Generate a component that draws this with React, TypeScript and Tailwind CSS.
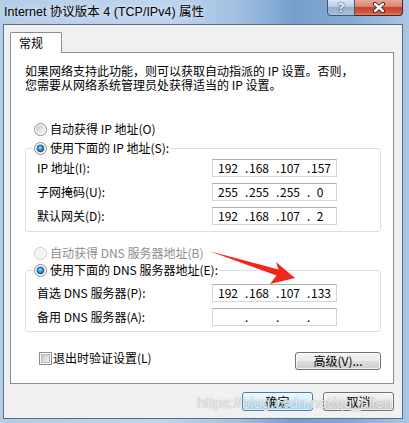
import React from "react";

function Radio({ checked, disabled }: { checked?: boolean; disabled?: boolean }) {
  return (
    <svg width="13" height="13" viewBox="0 0 13 13" className="shrink-0">
      <defs>
        <linearGradient id="radioFill" x1="0" y1="0" x2="1" y2="1">
          <stop offset="0" stopColor="#c9c9c9" />
          <stop offset="1" stopColor="#fbfbfb" />
        </linearGradient>
        <radialGradient id="radioDot" cx="0.45" cy="0.4" r="0.65">
          <stop offset="0" stopColor="#a6ecff" />
          <stop offset="0.45" stopColor="#2f98dd" />
          <stop offset="1" stopColor="#0d4b88" />
        </radialGradient>
      </defs>
      <circle cx="6.5" cy="6.5" r="6" fill="#ffffff" stroke={disabled ? "#c6c6c6" : "#8a8a8a"} />
      <circle cx="6.5" cy="6.5" r="4.6" fill={disabled ? "#f3f3f3" : "url(#radioFill)"} />
      {checked && <circle cx="6.5" cy="6.5" r="3.4" fill="url(#radioDot)" stroke="#1b4f82" strokeWidth="0.7" />}
    </svg>
  );
}

function Checkbox() {
  return (
    <svg width="13" height="13" viewBox="0 0 13 13" className="shrink-0">
      <defs>
        <linearGradient id="cbFill" x1="0" y1="0" x2="1" y2="1">
          <stop offset="0" stopColor="#c6c6c6" />
          <stop offset="1" stopColor="#f5f5f5" />
        </linearGradient>
      </defs>
      <rect x="0.5" y="0.5" width="12" height="12" fill="#ffffff" stroke="#8e8f8f" />
      <rect x="2.5" y="2.5" width="8" height="8" fill="url(#cbFill)" stroke="#b4b6b8" />
    </svg>
  );
}

function IpBox({ parts }: { parts: string[] }) {
  return (
    <div className="flex h-[18px] w-[125px] border border-[#d3d6dc] border-t-[#abadb3] bg-white leading-[16px]">
      {parts.map((p, i) => (
        <div key={i} className="flex w-[31px] shrink-0">
          <span className="w-[5px] pl-[1px]">{i > 0 ? "." : ""}</span>
          <span className="w-[18px] text-center">{p}</span>
        </div>
      ))}
    </div>
  );
}

function WinButton({ label, primary, className }: { label: string; primary?: boolean; className: string }) {
  return (
    <div
      className={
        "flex items-center justify-center rounded-[3px] border leading-[16px] shadow-[inset_0_0_0_1px_rgba(255,255,255,0.7)] " +
        (primary
          ? "border-[#3c7fb1] bg-[linear-gradient(#eaf6fd_0%,#d9f0fc_50%,#bee6fd_50%,#a7d9f5_100%)] "
          : "border-[#707070] bg-[linear-gradient(#f2f2f2_0%,#ebebeb_50%,#dddddd_50%,#cfcfcf_100%)] ") +
        className
      }
    >
      {label}
    </div>
  );
}

export default function App() {
  return (
    <div className="relative flex h-[423px] w-[409px] flex-col overflow-hidden bg-[linear-gradient(90deg,#b3cde8_0%,#bdd5ee_40%,#a2c0e1_58%,#769fcd_72%,#84aad4_86%,#a9c7e6_100%)] font-['Noto_Sans_CJK_SC',sans-serif] text-[12px] text-black">
      {/* title bar */}
      <div className="flex h-[24px] shrink-0 items-start justify-between pl-[4px] pr-[6px]">
        <div className="mt-[3px] font-['Liberation_Sans','Noto_Sans_CJK_SC',sans-serif] text-[12.5px] leading-[18px] [text-shadow:0_0_6px_rgba(255,255,255,0.95)]">
          Internet 协议版本 4 (TCP/IPv4) 属性
        </div>
        <div className="flex">
          <div className="flex h-[16px] w-[28px] items-center justify-center rounded-bl-[4px] border border-t-0 border-[#48596e] bg-[linear-gradient(#dbe6f2_0%,#b9cde2_45%,#92afcd_50%,#a8c2dc_100%)] font-['Noto_Sans',sans-serif] text-[12px] font-bold leading-[14px] text-white [text-shadow:0_0_2px_#1f3550,0_0_1px_#1f3550]">
            ?
          </div>
          <div className="flex h-[16px] w-[48px] items-center justify-center rounded-br-[4px] border border-l-0 border-t-0 border-[#4a2520] bg-[linear-gradient(#e9a89a_0%,#da826f_45%,#c6432d_50%,#d4573c_85%,#e3856a_100%)]">
            <svg width="14" height="11" viewBox="0 0 14 11">
              <path d="M3 2 L11 9 M11 2 L3 9" stroke="#3b1c16" strokeWidth="4.2" strokeLinecap="round" />
              <path d="M3 2 L11 9 M11 2 L3 9" stroke="#ffffff" strokeWidth="2.4" strokeLinecap="round" />
            </svg>
          </div>
        </div>
      </div>

      {/* client area */}
      <div className="ml-[3px] mr-[6px] flex h-[395px] shrink-0 flex-col border border-[#5b6d82] bg-[#f0f0f0] px-[6px] pt-[7px]">
        {/* tab */}
        <div className="relative z-10 -mb-px flex h-[21px] w-[52px] rounded-t-[2px] border border-b-0 border-[#898c95] bg-white pl-[8px] pt-[1px] leading-[18px]">
          常规
        </div>
        {/* panel */}
        <div className="flex h-[332px] w-[384px] flex-col border border-[#898c95] bg-white">
          <div className="ml-[14px] mt-[11px] leading-[14px]">
            <div>如果网络支持此功能，则可以获取自动指派的 IP 设置。否则，</div>
            <div>您需要从网络系统管理员处获得适当的 IP 设置。</div>
          </div>

          <div className="ml-[23px] mt-[29px] flex h-[16px] items-center gap-[3px] leading-[16px]">
            <Radio />
            <span>自动获得 IP 地址(O)</span>
          </div>

          <fieldset className="ml-[14px] mt-[3px] w-[356px] rounded-[3px] border border-[#d5dfe5] pb-[6px]">
            <legend className="ml-[7px] px-[1px]">
              <div className="flex h-[16px] items-center gap-[3px] leading-[16px]">
                <Radio checked />
                <span>使用下面的 IP 地址(S):</span>
              </div>
            </legend>
            <div className="ml-[11px] grid grid-cols-[175px_125px] items-center gap-y-[6px] pt-[3px]">
              <span>IP 地址(I):</span>
              <IpBox parts={["192", "168", "107", "157"]} />
              <span>子网掩码(U):</span>
              <IpBox parts={["255", "255", "255", "0"]} />
              <span>默认网关(D):</span>
              <IpBox parts={["192", "168", "107", "2"]} />
            </div>
          </fieldset>

          <div className="ml-[23px] mt-[13px] flex h-[16px] items-center gap-[3px] leading-[16px] text-[#8d8d8d]">
            <Radio disabled />
            <span>自动获得 DNS 服务器地址(B)</span>
          </div>

          <fieldset className="ml-[14px] mt-[1px] w-[356px] rounded-[3px] border border-[#d5dfe5] pb-[5px]">
            <legend className="ml-[7px] px-[1px]">
              <div className="flex h-[16px] items-center gap-[3px] leading-[16px]">
                <Radio checked />
                <span>使用下面的 DNS 服务器地址(E):</span>
              </div>
            </legend>
            <div className="ml-[11px] grid grid-cols-[175px_125px] items-center gap-y-[6px] pt-[6px]">
              <span>首选 DNS 服务器(P):</span>
              <IpBox parts={["192", "168", "107", "133"]} />
              <span>备用 DNS 服务器(A):</span>
              <IpBox parts={["", "", "", ""]} />
            </div>
          </fieldset>

          <div className="mt-[20px] flex items-start justify-between pl-[28px] pr-[12px]">
            <div className="flex h-[12px] items-center gap-[1px] leading-[16px]">
              <Checkbox />
              <span>退出时验证设置(L)</span>
            </div>
            <WinButton label="高级(V)..." className="h-[18px] w-[86px]" />
          </div>
        </div>

        {/* OK / Cancel */}
        <div className="mt-[8px] flex w-[384px] justify-end gap-[10px]">
          <WinButton label="确定" primary className="h-[19px] w-[71px]" />
          <WinButton label="取消" className="h-[19px] w-[71px]" />
        </div>
      </div>

      {/* watermark */}
      <div className="pointer-events-none absolute left-[197px] top-[394px] font-['Liberation_Sans',sans-serif] text-[15px] leading-[18px] text-white/80 [text-shadow:0_0_1px_rgba(120,120,120,0.9)]">
        https://blog.csdn.net/qq_allen
      </div>

      {/* red arrow */}
      <svg className="pointer-events-none absolute left-0 top-0" width="409" height="423" viewBox="0 0 409 423">
        <polygon points="209,251 278.5,269.5 276,262 295,278 270,284 276.5,275.5" fill="#f3261c" />
      </svg>
    </div>
  );
}
